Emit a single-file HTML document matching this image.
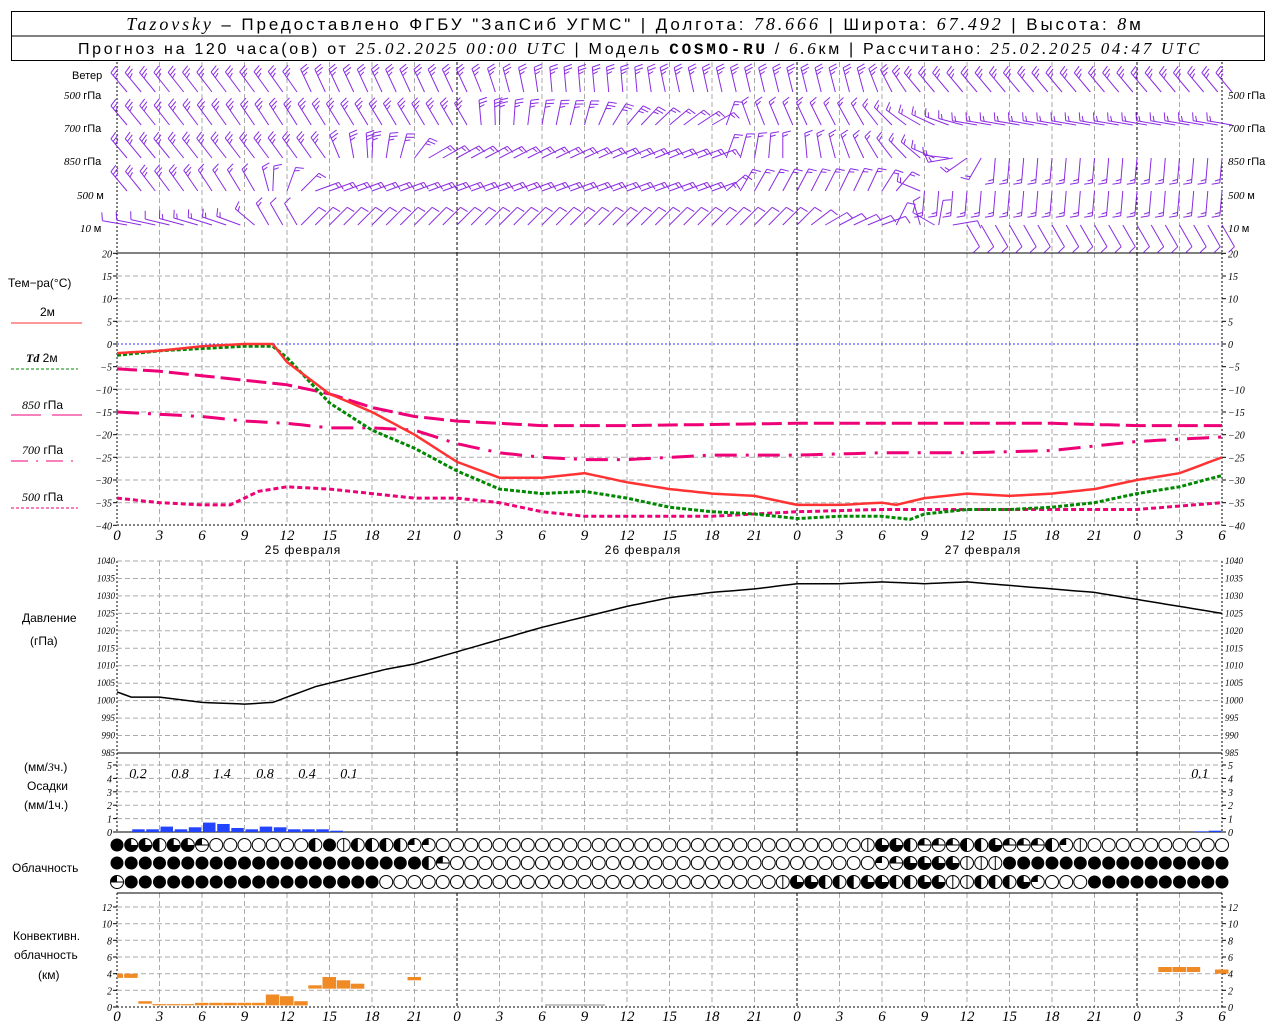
<!DOCTYPE html>
<html><head><meta charset="utf-8"><style>
body{margin:0;background:#fff;width:1280px;height:1024px;overflow:hidden;font-family:"Liberation Sans",sans-serif}
svg{position:absolute;left:0;top:0}
text{font-family:"Liberation Sans",sans-serif}
.it{font-family:"Liberation Serif",serif;font-style:italic}
</style></head><body>
<svg id="s" width="1280" height="1024" xmlns="http://www.w3.org/2000/svg">
<rect x="11.5" y="11.5" width="1253" height="49" fill="none" stroke="#000"/>
<line x1="12" y1="36" x2="1265" y2="36" stroke="#000"/>
<text x="635" y="30" font-size="17" text-anchor="middle" letter-spacing="2.9"><tspan class="it" font-size="18">Tazovsky</tspan> – Предоставлено ФГБУ "ЗапСиб УГМС" | Долгота: <tspan class="it" font-size="18">78.666</tspan> | Широта: <tspan class="it" font-size="18">67.492</tspan> | Высота: <tspan class="it" font-size="18">8</tspan>м</text>
<text x="640" y="54" font-size="16" text-anchor="middle" letter-spacing="2.7">Прогноз на 120 часа(ов) от <tspan class="it" font-size="17">25.02.2025 00:00 UTC</tspan> | Модель <tspan font-family="Liberation Mono" font-weight="bold">COSMO-RU</tspan> / <tspan class="it" font-size="17">6.6</tspan>км | Рассчитано: <tspan class="it" font-size="17">25.02.2025 04:47 UTC</tspan></text>
<g font-size="11">
<text x="72" y="79">Ветер</text>
<text x="64" y="99" class="it">500 <tspan font-family="Liberation Sans" font-style="normal">гПа</tspan></text>
<text x="64" y="132" class="it">700 <tspan font-family="Liberation Sans" font-style="normal">гПа</tspan></text>
<text x="64" y="165" class="it">850 <tspan font-family="Liberation Sans" font-style="normal">гПа</tspan></text>
<text x="77" y="199" class="it">500 <tspan font-family="Liberation Sans" font-style="normal">м</tspan></text>
<text x="80" y="232" class="it">10 <tspan font-family="Liberation Sans" font-style="normal">  м</tspan></text>
<text x="1228" y="99" class="it">500 <tspan font-family="Liberation Sans" font-style="normal">гПа</tspan></text>
<text x="1228" y="132" class="it">700 <tspan font-family="Liberation Sans" font-style="normal">гПа</tspan></text>
<text x="1228" y="165" class="it">850 <tspan font-family="Liberation Sans" font-style="normal">гПа</tspan></text>
<text x="1228" y="199" class="it">500 <tspan font-family="Liberation Sans" font-style="normal">м</tspan></text>
<text x="1228" y="232" class="it">10 <tspan font-family="Liberation Sans" font-style="normal">  м</tspan></text>
</g>
<g font-size="12">
<text x="8" y="287">Тем−ра(°С)</text>
<text x="40" y="316">2м</text>
<line x1="11" y1="323" x2="82" y2="323" stroke="#f33" stroke-width="1"/>
<text x="26" y="362"><tspan class="it" font-weight="bold">Td</tspan>  2м</text>
<line x1="11" y1="369" x2="78" y2="369" stroke="#080" stroke-dasharray="3,2"/>
<text x="22" y="409"><tspan class="it">850</tspan> гПа</text>
<line x1="11" y1="415" x2="41" y2="415" stroke="#e07"/><line x1="52" y1="415" x2="82" y2="415" stroke="#e07"/>
<text x="22" y="454"><tspan class="it">700</tspan> гПа</text>
<line x1="11" y1="461" x2="78" y2="461" stroke="#e07" stroke-dasharray="17,8,2,8"/>
<text x="22" y="501"><tspan class="it">500</tspan> гПа</text>
<line x1="11" y1="508" x2="78" y2="508" stroke="#e07" stroke-dasharray="3,2"/>
<text x="22" y="622">Давление</text>
<text x="30" y="645">(гПа)</text>
<text x="24" y="771">(мм/<tspan class="it">3</tspan>ч.)</text>
<text x="27" y="790">Осадки</text>
<text x="24" y="809">(мм/1ч.)</text>
<text x="12" y="872">Облачность</text>
<text x="13" y="940">Конвективн.</text>
<text x="14" y="959">облачность</text>
<text x="38" y="979">(км)</text>
<text x="303" y="554" text-anchor="middle" letter-spacing="1">25 февраля</text>
<text x="643" y="554" text-anchor="middle" letter-spacing="1">26 февраля</text>
<text x="983" y="554" text-anchor="middle" letter-spacing="1">27 февраля</text>
</g>
<g id="g"></g>
</svg>
<script>
var S=document.getElementById('g'),out='';
function X(h){return 117+h*1105/78;}
function L(x1,y1,x2,y2,st){out+='<line x1="'+x1.toFixed(1)+'" y1="'+y1.toFixed(1)+'" x2="'+x2.toFixed(1)+'" y2="'+y2.toFixed(1)+'" '+st+'/>';}
function T(x,y,t,st){out+='<text x="'+x+'" y="'+y+'" '+st+'>'+t+'</text>';}
var G='stroke="#aaa" stroke-dasharray="5,3"';
var panels=[[62,253],[253,525],[561,753],[753,832],[893,1007]];
panels.forEach(function(p,i){
 for(var k=1;k<26;k++){var x=X(k*3);
  if(k%8==0)L(x,p[0],x,p[1],'stroke="#000" stroke-dasharray="3,2"');
  else L(x,p[0],x,p[1],G);}
 L(117,p[0],117,p[1],'stroke="#000" stroke-dasharray="2,2"');
 L(1222,p[0],1222,p[1],'stroke="#000" stroke-dasharray="2,2"');
});
function yT(v){return 344-v*272/60;}
for(var v=20;v>=-40;v-=5){var y=yT(v);
 if(v!=20&&v!=-40)L(117,y,1222,y,v==0?'stroke="#33f" stroke-dasharray="2,2"':G);
 L(113,y,117,y,'stroke="#000"');L(1222,y,1226,y,'stroke="#000"');
 T(112,y+4,v==0?'0':(v<0?'−'+(-v):v),'class="it" font-size="10" text-anchor="end"');
 T(1228,y+4,v==0?'0':(v<0?'−'+(-v):v),'class="it" font-size="10"');}
L(117,253,1222,253,'stroke="#000"');
L(117,525,1222,525,'stroke="#000" stroke-dasharray="2,2"');
function yP(v){return 561+(1040-v)*192/55;}
for(var v=1040;v>=985;v-=5){var y=yP(v);
 if(v!=985&&v!=1040)L(117,y,1222,y,G);
 T(115,y+3,v,'class="it" font-size="9" text-anchor="end"');T(1225,y+3,v,'class="it" font-size="9"');}
L(117,561,1222,561,'stroke="#aaa" stroke-dasharray="5,3"');
L(117,753,1222,753,'stroke="#000"');
function yR(v){return 832-v*13.4;}
for(var v=0;v<=5;v++){var y=yR(v);if(v>0)L(117,y,1222,y,G);
 L(113,y,117,y,'stroke="#000"');L(1222,y,1226,y,'stroke="#000"');
 T(112,y+4,v,'class="it" font-size="10" text-anchor="end"');T(1228,y+4,v,'class="it" font-size="10"');}
L(117,832,1222,832,'stroke="#000"');
function yC(v){return 1007-v*100/12;}
for(var v=0;v<=12;v+=2){var y=yC(v);if(v>0)L(117,y,1222,y,G);
 L(113,y,117,y,'stroke="#000"');L(1222,y,1226,y,'stroke="#000"');
 T(112,y+4,v,'class="it" font-size="10" text-anchor="end"');T(1228,y+4,v,'class="it" font-size="10"');}
L(117,893,1222,893,'stroke="#000"');
L(117,1007,1222,1007,'stroke="#000" stroke-dasharray="2,2"');
var lb=[0,3,6,9,12,15,18,21];
for(var k=0;k<=26;k++){var t=lb[k%8],x=X(k*3);
 T(x,540,t,'class="it" font-size="15" text-anchor="middle"');T(x,1021,t,'class="it" font-size="15" text-anchor="middle"');}
function interp(pts,h){for(var i=0;i<pts.length-1;i++){if(h<=pts[i+1][0]){var a=pts[i],b=pts[i+1],f=(h-a[0])/(b[0]-a[0]);return a[1]+(b[1]-a[1])*f;}}return pts[pts.length-1][1];}
function curve(pts,fy,st){var d='';for(var h=0;h<=78;h+=0.5){d+=(h?'L':'M')+X(h).toFixed(1)+' '+fy(interp(pts,h)).toFixed(1);}out+='<path d="'+d+'" fill="none" '+st+'/>';}
var T2=[[0,-2],[3,-1.5],[6,-0.5],[9,0],[11,0],[12,-4],[15,-11],[18,-15],[21,-20],[24,-26],[27,-29.5],[30,-29.5],[33,-28.5],[36,-30.5],[39,-32],[42,-33],[45,-33.5],[48,-35.5],[51,-35.5],[54,-35],[55,-35.5],[57,-34],[60,-33],[63,-33.5],[66,-33],[69,-32],[72,-30],[75,-28.5],[78,-25]];
var TD=[[0,-2.5],[3,-1.5],[6,-1],[9,-0.5],[11,-0.5],[12,-3],[15,-13],[18,-19],[21,-23],[24,-28],[27,-32],[30,-33],[33,-32.5],[36,-34],[39,-36],[42,-37],[45,-37.5],[48,-38.5],[51,-38],[54,-38],[56,-38.7],[57,-37.5],[60,-36.5],[63,-36.5],[66,-36],[69,-35],[72,-33],[75,-31.5],[78,-29]];
var T85=[[0,-5.5],[3,-6],[6,-7],[9,-8],[12,-9],[15,-11],[18,-14],[21,-16],[24,-17],[27,-17.5],[30,-18],[36,-18],[48,-17.5],[60,-17.5],[66,-17.5],[72,-18],[78,-18]];
var T70=[[0,-15],[6,-16],[9,-17],[12,-17.5],[15,-18.5],[18,-18.5],[21,-19],[24,-22],[27,-24],[30,-25],[33,-25.5],[36,-25.5],[42,-24.5],[48,-24.5],[54,-24],[60,-24],[66,-23.5],[69,-22.5],[72,-21.5],[78,-20.5]];
var T50=[[0,-34],[3,-35],[6,-35.5],[8,-35.5],[10,-32.5],[12,-31.5],[15,-32],[18,-33],[21,-34],[24,-34],[27,-35],[30,-37],[33,-38],[36,-38],[42,-38],[48,-37],[54,-36.5],[60,-36.5],[66,-36.5],[72,-36.5],[78,-35]];
curve(T85,yT,'stroke="#e07" stroke-width="3" stroke-dasharray="20,6"');
curve(T70,yT,'stroke="#e07" stroke-width="3" stroke-dasharray="22,9,3,9"');
curve(T50,yT,'stroke="#e07" stroke-width="3" stroke-dasharray="5,3"');
curve(TD,yT,'stroke="#080" stroke-width="3" stroke-dasharray="4,2"');
curve(T2,yT,'stroke="#f33" stroke-width="2.5"');
var P=[[0,1002.5],[1,1001],[3,1001],[6,999.5],[9,999],[11,999.5],[14,1004],[16,1006],[19,1009],[21,1010.5],[24,1014],[27,1017.5],[30,1021],[33,1024],[36,1027],[39,1029.5],[42,1031],[45,1032],[48,1033.5],[51,1033.5],[54,1034],[57,1033.5],[60,1034],[63,1033],[66,1032],[69,1031],[72,1029],[75,1027],[78,1025]];
curve(P,yP,'stroke="#000" stroke-width="1.5"');
var pr={1:0.2,2:0.2,3:0.4,4:0.2,5:0.35,6:0.7,7:0.6,8:0.3,9:0.2,10:0.4,11:0.35,12:0.2,13:0.2,14:0.2,15:0.1,76:0.05,77:0.1};
for(var h in pr){var x=X(+h)+1;out+='<rect x="'+x.toFixed(1)+'" y="'+yR(pr[h]).toFixed(1)+'" width="12.5" height="'+(pr[h]*13.4).toFixed(1)+'" fill="#2244ff"/>';}
[['0.2',138],['0.8',180],['1.4',222],['0.8',265],['0.4',307],['0.1',349],['0.1',1200]].forEach(function(a){T(a[1],778,a[0],'class="it" font-size="14" text-anchor="middle"');});
var cv=[[0,3.5,4],[1,3.5,4],[2,0.4,0.7],[3,0.2,0.35],[4,0.2,0.35],[5,0.2,0.35],[6,0.2,0.5],[7,0.2,0.5],[8,0.2,0.5],[9,0.2,0.5],[10,0.2,0.5],[11,0.2,1.5],[12,0.2,1.3],[13,0.2,0.7],[14,2.2,2.6],[15,2.2,3.6],[16,2.2,3.2],[17,2.2,2.8],[21,3.2,3.6],[74,4.2,4.8],[75,4.2,4.8],[76,4.2,4.8],[78,4.0,4.5]];
cv.forEach(function(c){var x=X(c[0])-(c[0]==0?0:7),w=c[0]==0?6:13.5;out+='<rect x="'+x.toFixed(1)+'" y="'+yC(c[2]).toFixed(1)+'" width="'+w+'" height="'+((c[2]-c[1])*100/12).toFixed(1)+'" fill="#f08a24"/>';});
L(545,1005,605,1005,'stroke="#888"');
function row(spec){var a=[];spec.forEach(function(s){for(var i=0;i<s[1];i++)a.push(s[0]);});return a;}
var r1=row([['F',1],['3',2],['H',1],['3',2],['M',1],['E',7],['H',1],['F',1],['I',1],['H',4],['Q',2],['E',30],['I',1],['3',2],['H',1],['M',3],['H',2],['3',1],['M',3],['H',1],['Q',1],['I',1],['E',9]]);
var r2=row([['F',22],['H',1],['M',1],['E',30],['Q',1],['M',1],['3',4],['I',3],['F',16]]);
var r3=row([['M',1],['F',18],['E',28],['I',1],['3',2],['H',3],['3',2],['H',2],['3',2],['I',2],['H',3],['3',1],['Q',1],['E',3],['F',10]]);
function circ(cx,cy,t){var r=6.5,st='stroke="#000" stroke-width="1"';
 if(t=='F'){out+='<circle cx="'+cx+'" cy="'+cy+'" r="'+r+'" fill="#000"/>';return;}
 out+='<circle cx="'+cx+'" cy="'+cy+'" r="'+r+'" fill="#fff" '+st+'/>';
 if(t=='H')out+='<path d="M'+cx+' '+(cy-r)+'A'+r+' '+r+' 0 0 0 '+cx+' '+(cy+r)+'Z" fill="#000"/>';
 if(t=='3')out+='<path d="M'+cx+' '+cy+'L'+cx+' '+(cy-r)+'A'+r+' '+r+' 0 1 0 '+(cx+r)+' '+cy+'Z" fill="#000"/>';
 if(t=='Q')out+='<path d="M'+cx+' '+cy+'L'+cx+' '+(cy-r)+'A'+r+' '+r+' 0 0 0 '+(cx-r)+' '+cy+'Z" fill="#000"/>';
 if(t=='I')L(cx,cy-r,cx,cy+r,st);
 if(t=='M'){out+='<path d="M'+cx+' '+cy+'L'+cx+' '+(cy-r)+'A'+r+' '+r+' 0 0 0 '+(cx-r)+' '+cy+'Z" fill="#000"/>';L(cx-r,cy,cx+r,cy,st);}
}
[[r1,845],[r2,863],[r3,882]].forEach(function(rr){for(var h=0;h<=78;h++)circ(+X(h).toFixed(1),rr[1],rr[0][h]||'E');});
function barb(x,y,ang,n){var a=ang*Math.PI/180,Ls=25,tx=x+Ls*Math.sin(a),ty=y-Ls*Math.cos(a);
 var st='stroke="#8a2be2" stroke-width="1"';L(x,y,tx,ty,st);
 var ux=Math.sin(a),uy=-Math.cos(a),px=Math.cos(a),py=Math.sin(a);
 for(var i=0;i<n;i++){var bx=tx-ux*i*3.5,by=ty-uy*i*3.5;var l=(i==n-1&&n>1)?5:8;L(bx,by,bx+px*l+ux*2,by+py*l+uy*2,st);}
}
function rowW(y,pts,nb){for(var h=0;h<=78;h++){var a=interp(pts,h);var n=interp(nb,h);barb(X(h)+(a<0&&a>-90?10:0),y,a,Math.round(n));}}
rowW(92,[[0,-40],[12,-35],[13,-25],[24,-25],[27,-15],[30,-5],[36,-5],[38,-12],[52,-15],[56,-40],[78,-40]],[[0,3],[78,3]]);
rowW(125,[[0,-40],[12,-32],[24,-30],[25,-5],[30,10],[33,15],[36,40],[42,60],[44,-20],[52,-30],[56,-60],[60,-80],[78,-80]],[[0,3],[30,3],[44,2],[78,2]]);
rowW(158,[[0,-40],[14,-35],[16,-10],[20,15],[22,60],[42,70],[43,20],[52,-25],[56,-50],[59,-100],[62,-175],[78,-175]],[[0,3],[20,3],[22,2],[78,2]]);
rowW(191,[[0,-40],[9,-30],[10,-15],[12,20],[14,70],[42,70],[44,30],[53,25],[55,40],[57,-175],[78,-175]],[[0,3],[10,2],[78,2]]);
rowW(225,[[0,-80],[8,-70],[10,-30],[12,-30],[13,45],[48,45],[50,60],[54,70],[57,-60],[60,150],[78,150]],[[0,1],[8,2],[12,1],[78,1]]);
S.innerHTML=out;
</script>
</body></html>
